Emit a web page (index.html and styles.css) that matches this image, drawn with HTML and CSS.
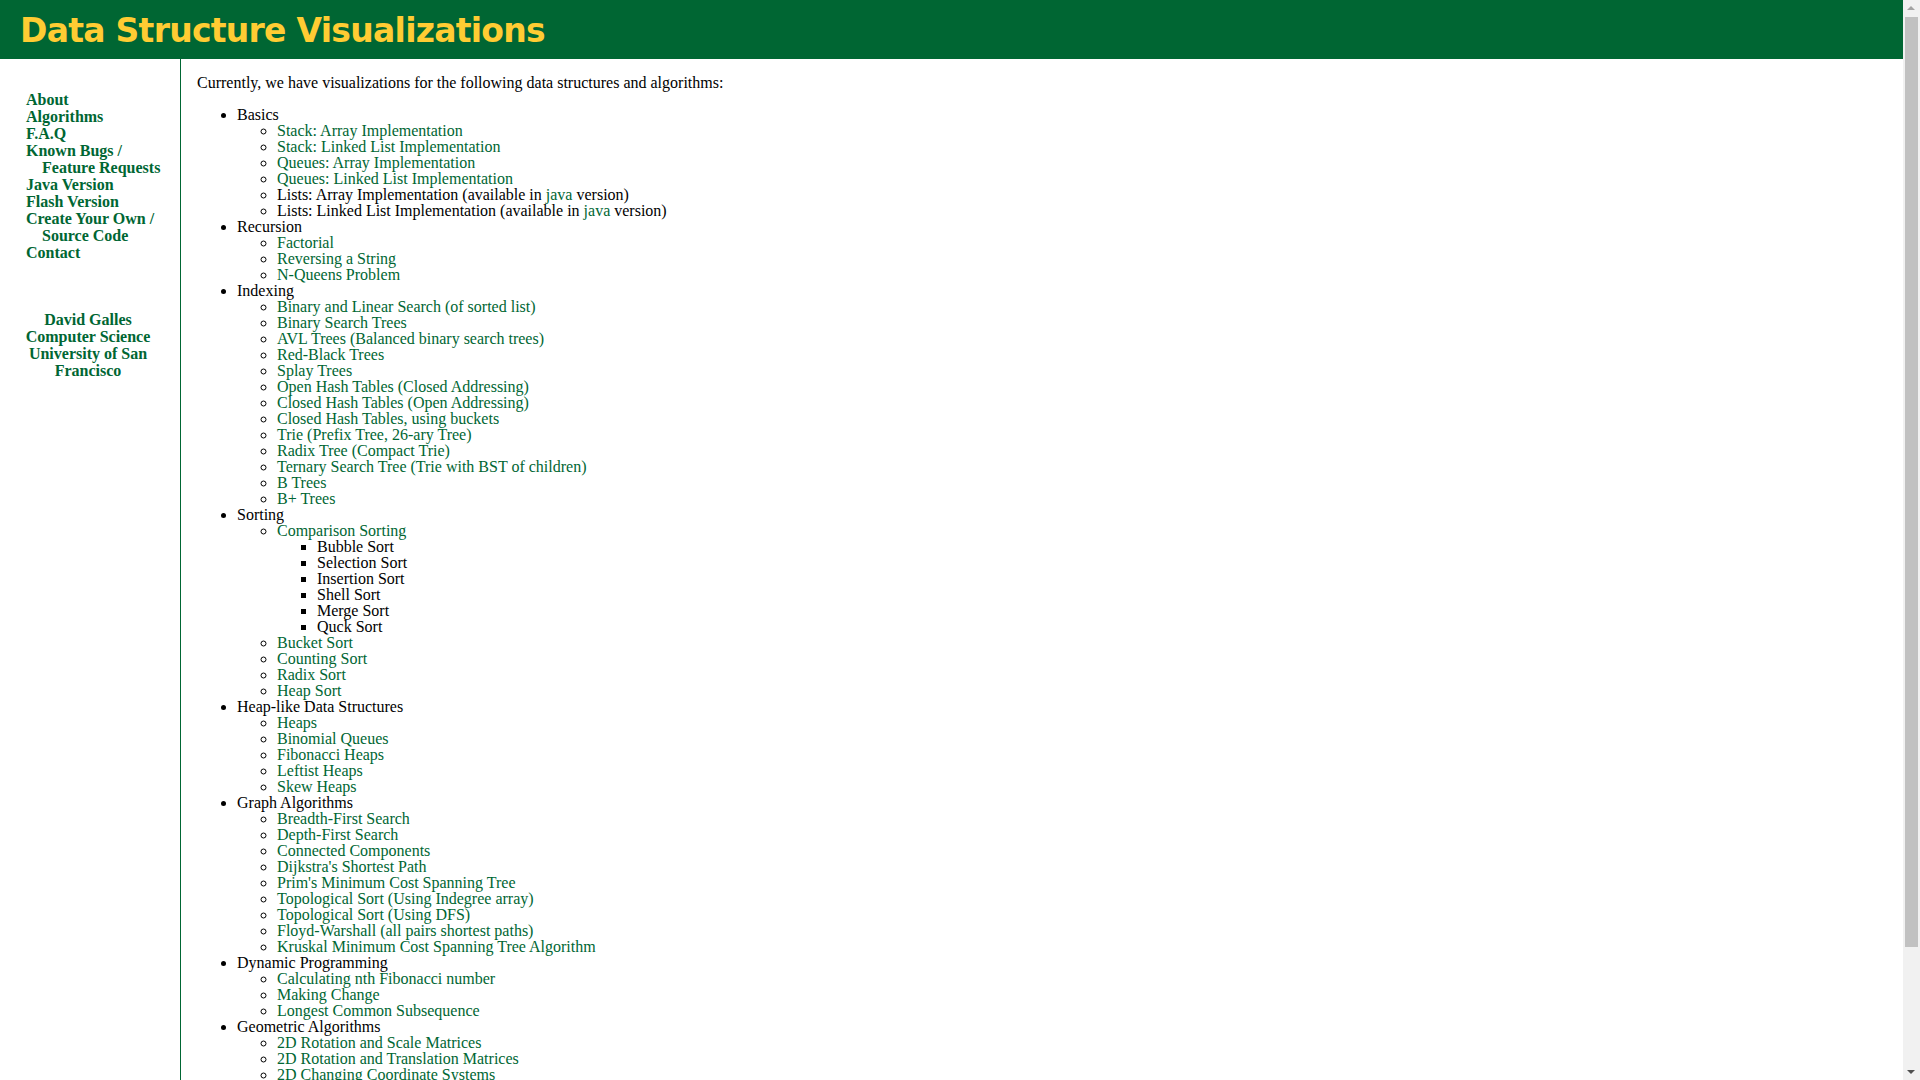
FILE: index.html
```html
<!DOCTYPE html>
<html>
<head>
<meta charset="utf-8">
<title>Data Structure Visualizations</title>
<link rel="stylesheet" href="styles.css">
</head>
<body>
<div class="header"><h1 class="title">Data Structure Visualizations</h1></div>
<div class="layout">
  <div class="sidebar">
    <nav class="nav">
      <a href="#">About</a>
      <a href="#">Algorithms</a>
      <a href="#">F.A.Q</a>
      <a href="#">Known Bugs / Feature Requests</a>
      <a href="#">Java Version</a>
      <a href="#">Flash Version</a>
      <a href="#">Create Your Own / Source Code</a>
      <a href="#">Contact</a>
    </nav>
    <div class="author">
      <a href="#">David Galles</a><br>
      <a href="#">Computer Science</a><br>
      <a href="#">University of San Francisco</a>
    </div>
  </div>
  <div class="main">
    <p class="intro">Currently, we have visualizations for the following data structures and algorithms:</p>
    <ul class="l1">
      <li>Basics
        <ul class="l2">
          <li><a href="#">Stack: Array Implementation</a></li>
          <li><a href="#">Stack: Linked List Implementation</a></li>
          <li><a href="#">Queues: Array Implementation</a></li>
          <li><a href="#">Queues: Linked List Implementation</a></li>
          <li>Lists: Array Implementation (available in <a href="#">java</a> version)</li>
          <li>Lists: Linked List Implementation (available in <a href="#">java</a> version)</li>
        </ul>
      </li>
      <li>Recursion
        <ul class="l2">
          <li><a href="#">Factorial</a></li>
          <li><a href="#">Reversing a String</a></li>
          <li><a href="#">N-Queens Problem</a></li>
        </ul>
      </li>
      <li>Indexing
        <ul class="l2">
          <li><a href="#">Binary and Linear Search (of sorted list)</a></li>
          <li><a href="#">Binary Search Trees</a></li>
          <li><a href="#">AVL Trees (Balanced binary search trees)</a></li>
          <li><a href="#">Red-Black Trees</a></li>
          <li><a href="#">Splay Trees</a></li>
          <li><a href="#">Open Hash Tables (Closed Addressing)</a></li>
          <li><a href="#">Closed Hash Tables (Open Addressing)</a></li>
          <li><a href="#">Closed Hash Tables, using buckets</a></li>
          <li><a href="#">Trie (Prefix Tree, 26-ary Tree)</a></li>
          <li><a href="#">Radix Tree (Compact Trie)</a></li>
          <li><a href="#">Ternary Search Tree (Trie with BST of children)</a></li>
          <li><a href="#">B Trees</a></li>
          <li><a href="#">B+ Trees</a></li>
        </ul>
      </li>
      <li>Sorting
        <ul class="l2">
          <li><a href="#">Comparison Sorting</a>
            <ul class="l3">
              <li>Bubble Sort</li>
              <li>Selection Sort</li>
              <li>Insertion Sort</li>
              <li>Shell Sort</li>
              <li>Merge Sort</li>
              <li>Quck Sort</li>
            </ul>
          </li>
          <li><a href="#">Bucket Sort</a></li>
          <li><a href="#">Counting Sort</a></li>
          <li><a href="#">Radix Sort</a></li>
          <li><a href="#">Heap Sort</a></li>
        </ul>
      </li>
      <li>Heap-like Data Structures
        <ul class="l2">
          <li><a href="#">Heaps</a></li>
          <li><a href="#">Binomial Queues</a></li>
          <li><a href="#">Fibonacci Heaps</a></li>
          <li><a href="#">Leftist Heaps</a></li>
          <li><a href="#">Skew Heaps</a></li>
        </ul>
      </li>
      <li>Graph Algorithms
        <ul class="l2">
          <li><a href="#">Breadth-First Search</a></li>
          <li><a href="#">Depth-First Search</a></li>
          <li><a href="#">Connected Components</a></li>
          <li><a href="#">Dijkstra's Shortest Path</a></li>
          <li><a href="#">Prim's Minimum Cost Spanning Tree</a></li>
          <li><a href="#">Topological Sort (Using Indegree array)</a></li>
          <li><a href="#">Topological Sort (Using DFS)</a></li>
          <li><a href="#">Floyd-Warshall (all pairs shortest paths)</a></li>
          <li><a href="#">Kruskal Minimum Cost Spanning Tree Algorithm</a></li>
        </ul>
      </li>
      <li>Dynamic Programming
        <ul class="l2">
          <li><a href="#">Calculating nth Fibonacci number</a></li>
          <li><a href="#">Making Change</a></li>
          <li><a href="#">Longest Common Subsequence</a></li>
        </ul>
      </li>
      <li>Geometric Algorithms
        <ul class="l2">
          <li><a href="#">2D Rotation and Scale Matrices</a></li>
          <li><a href="#">2D Rotation and Translation Matrices</a></li>
          <li><a href="#">2D Changing Coordinate Systems</a></li>
          <li><a href="#">3D Rotation and Scale Matrices</a></li>
          <li><a href="#">3D Changing Coordinate Systems</a></li>
        </ul>
      </li>
      <li>Others ...
        <ul class="l2">
          <li><a href="#">Disjoint Sets</a></li>
          <li>Huffman Coding (available in <a href="#">java</a> version)</li>
        </ul>
      </li>
    </ul>
  </div>
</div>
<div class="scrollbar" aria-hidden="true">
  <div class="sb-arrow sb-up"></div>
  <div class="sb-track"><div class="sb-thumb"></div></div>
  <div class="sb-arrow sb-down"></div>
</div>
</body>
</html>
```
FILE: styles.css
```css
html, body {
  margin: 0;
  padding: 0;
  background: #ffffff;
}
body {
  font-family: "Liberation Serif", "Times New Roman", serif;
  font-size: 16px;
  line-height: 16px;
  color: #000000;
  padding-right: 17px;
}
a {
  color: #006633;
  text-decoration: none;
}
.header {
  background: #006633;
  height: 59px;
  box-sizing: border-box;
  padding: 12px 0 9px 20px;
}
.title {
  margin: 0;
  font-family: "DejaVu Sans", Verdana, sans-serif;
  font-weight: bold;
  font-size: 33px;
  letter-spacing: -0.73px;
  line-height: 38px;
  color: #ffcc33;
  white-space: nowrap;
}
.layout {
  display: flex;
  align-items: stretch;
}
.sidebar {
  width: 181px;
  flex: 0 0 181px;
  box-sizing: border-box;
  border-right: 1px solid #006633;
  padding: 32px 0 0 26px;
  min-height: 1160px;
}
.nav {
  display: flex;
  flex-direction: column;
  align-items: flex-start;
  width: 140px;
}
.nav a,
.author a {
  font-weight: bold;
  line-height: 17px;
}
.nav a {
  padding-left: 16px;
  text-indent: -16px;
}
.author {
  margin: 50px 0 0 -3px;
  width: 130px;
  text-align: center;
  line-height: 17px;
}
.main {
  flex: 1 1 auto;
  padding: 0 0 20px 16px;
}
.intro {
  margin: 16px 0;
}
ul {
  margin: 0;
  padding-left: 40px;
}
.l1 {
  margin: 16px 0;
  list-style-type: disc;
}
.l2 {
  list-style-type: circle;
}
.l3 {
  list-style-type: square;
}
.scrollbar {
  position: fixed;
  top: 0;
  right: 0;
  width: 17px;
  height: 100vh;
  background: #f1f1f1;
  display: flex;
  flex-direction: column;
}
.sb-arrow {
  height: 17px;
  flex: 0 0 17px;
  position: relative;
}
.sb-arrow::after {
  content: "";
  position: absolute;
  left: 4px;
  width: 0;
  height: 0;
  border-left: 4px solid transparent;
  border-right: 4px solid transparent;
}
.sb-up::after {
  top: 6px;
  border-bottom: 4px solid #a3a3a3;
}
.sb-down::after {
  top: 7px;
  border-top: 4px solid #505050;
}
.sb-track {
  flex: 1 1 auto;
  padding: 0 2px;
}
.sb-thumb {
  height: 930px;
  background: #c1c1c1;
}
```
